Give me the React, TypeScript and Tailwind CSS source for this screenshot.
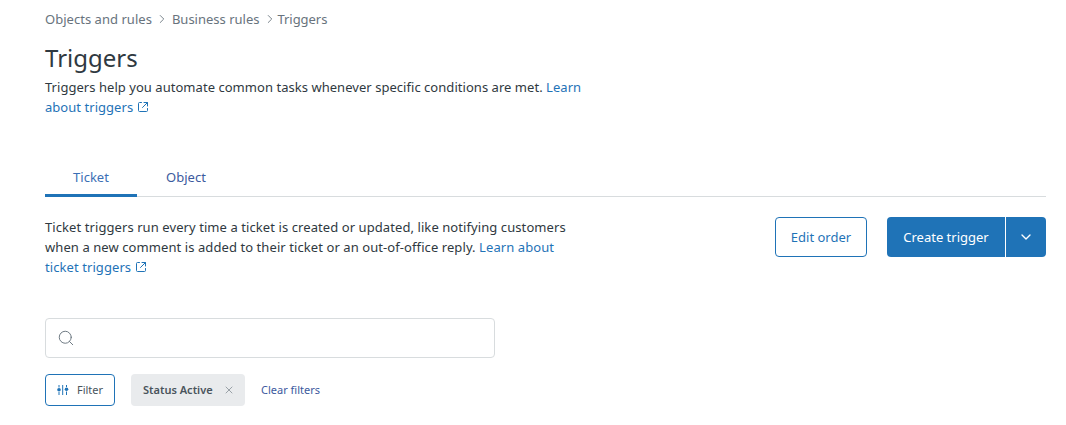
import { ChevronDown, ChevronRight, Search, X } from "lucide-react";

function ExternalIcon() {
  return (
    <svg viewBox="0 0 12 12" className="inline-block w-3 h-3 ml-1 align-[-1px] text-[#1f73b7]" fill="none" stroke="currentColor" strokeLinecap="round" strokeLinejoin="round">
      <path d="M10.5 7.5v2a1 1 0 0 1-1 1h-7a1 1 0 0 1-1-1v-7a1 1 0 0 1 1-1h2" />
      <path d="M7 1.5h3.5V5M10.5 1.5L5.5 6.5" />
    </svg>
  );
}

function FilterIcon() {
  return (
    <svg viewBox="0 0 12 12" className="w-3 h-3 text-[#1f73b7]" fill="currentColor" stroke="currentColor">
      <path d="M2 1v2.5M2 8v3M9.5 1v2M9.5 7.5V11M5.7 1v10" fill="none" />
      <circle cx="2" cy="5.8" r="1.8" stroke="none" />
      <circle cx="9.5" cy="5.2" r="1.8" stroke="none" />
    </svg>
  );
}

export default function App() {
  return (
    <div className="min-h-[425px] bg-white pl-[45px] pr-5 text-[#2f3941] font-['Noto_Sans',sans-serif] text-[13px] leading-5 overflow-hidden">
      {/* Breadcrumb */}
      <nav className="flex items-center gap-[3px] pt-2 h-[30px] text-[#68737d]">
        <span className="tracking-[0.03px]">Objects and rules</span>
        <ChevronRight className="w-3.5 h-3.5" strokeWidth={1.5} />
        <span>Business rules</span>
        <ChevronRight className="w-3.5 h-3.5 -mr-0.5" strokeWidth={1.5} />
        <span className="tracking-[-0.05px]">Triggers</span>
      </nav>

      <h1 className="mt-3 text-2xl leading-8 font-normal">Triggers</h1>
      <p className="mt-[3px] w-[545px] tracking-[0.04px]">
        Triggers help you automate common tasks whenever specific conditions are met.{" "}
        <a className="text-[#1f73b7]">Learn about triggers<ExternalIcon /></a>
      </p>

      {/* Tabs */}
      <div className="mt-10 flex h-10 border-b border-[#d8dcde]">
        <div className="w-[92px] h-10 border-b-[3px] border-[#1f73b7] text-center pt-2.5 text-[#3c6fb5]">Ticket</div>
        <div className="w-[98px] h-10 text-center pt-2.5 text-[#3c5a9e]">Object</div>
      </div>

      <div className="mt-5 flex justify-between">
        <p className="w-[530px] tracking-[0.08px]">
          Ticket triggers run every time a ticket is created or updated, like notifying customers when a new comment is added to their ticket or an out-of-office reply.{" "}
          <a className="text-[#1f73b7]">Learn about ticket triggers<ExternalIcon /></a>
        </p>
        <div className="flex gap-5 items-start">
          <button className="w-[92px] h-10 rounded border border-[#1f73b7] text-[#1f73b7]">Edit order</button>
          <div className="flex h-10 text-white">
            <button className="w-[118px] bg-[#1f73b7] rounded-l">Create trigger</button>
            <button className="w-[40px] ml-px bg-[#1f73b7] rounded-r flex items-center justify-center">
              <ChevronDown className="w-4 h-4" />
            </button>
          </div>
        </div>
      </div>

      {/* Search */}
      <div className="mt-[41px] w-[450px] h-10 border border-[#d8dcde] rounded flex items-center pl-[11px]">
        <Search className="w-[18px] h-[18px] text-[#68737d]" strokeWidth={1.25} />
      </div>

      {/* Filters */}
      <div className="mt-4 flex items-center text-[11px]">
        <button className="w-[70px] h-8 rounded border border-[#1f73b7] flex items-center justify-center gap-2 text-[#49545c]">
          <FilterIcon />
          Filter
        </button>
        <div className="ml-4 h-8 w-[114px] rounded bg-[#e9ebed] flex items-center pl-3 gap-[10px] font-semibold text-[#49545c]">
          Status Active
          <X className="w-3 h-3 text-[#68737d]" strokeWidth={1.25} />
        </div>
        <a className="ml-4 text-[#3c5a9e]">Clear filters</a>
      </div>
    </div>
  );
}
